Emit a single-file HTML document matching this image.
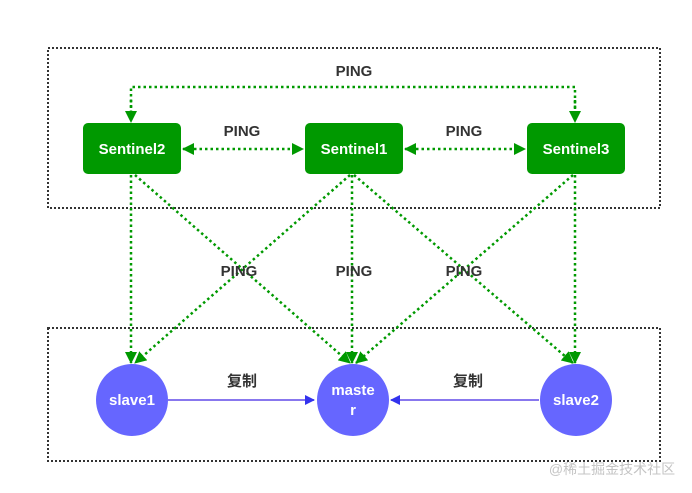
<!DOCTYPE html><html><head><meta charset="utf-8"><style>html,body{margin:0;padding:0;background:#fff}svg{display:block}</style></head><body>
<svg width="692" height="493" viewBox="0 0 692 493" xmlns="http://www.w3.org/2000/svg" font-family="Liberation Sans, Noto Sans CJK SC, sans-serif">
<defs>
<marker id="g" markerWidth="12" markerHeight="12" refX="11" refY="6" orient="auto" markerUnits="userSpaceOnUse" viewBox="0 0 12 12"><path d="M0,0 L12,6 L0,12 z" fill="#009900"/></marker>
<marker id="gs" markerWidth="12" markerHeight="12" refX="1" refY="6" orient="auto" markerUnits="userSpaceOnUse" viewBox="0 0 12 12"><path d="M12,0 L0,6 L12,12 z" fill="#009900"/></marker>
<marker id="b" markerWidth="10" markerHeight="10" refX="9" refY="5" orient="auto" markerUnits="userSpaceOnUse" viewBox="0 0 10 10"><path d="M0,0 L10,5 L0,10 z" fill="#3333ee"/></marker>
</defs>
<g fill="none" stroke="#333" stroke-width="2" stroke-dasharray="2 2">
<rect x="48" y="48" width="612" height="160"/>
<rect x="48" y="328" width="612" height="133"/>
</g>
<g fill="none" stroke="#009900" stroke-width="2.5" stroke-dasharray="2.5 3">
<path d="M131,113 L131,87 L575,87 L575,113" />
<line x1="131" y1="100" x2="131" y2="122" marker-end="url(#g)"/>
<line x1="575" y1="100" x2="575" y2="122" marker-end="url(#g)"/>
<line x1="183" y1="149" x2="303" y2="149" marker-start="url(#gs)" marker-end="url(#g)"/>
<line x1="405" y1="149" x2="525" y2="149" marker-start="url(#gs)" marker-end="url(#g)"/>
<line x1="131" y1="175" x2="131" y2="363" marker-end="url(#g)"/>
<line x1="135" y1="175" x2="350" y2="363" marker-end="url(#g)"/>
<line x1="350" y1="175" x2="135" y2="363" marker-end="url(#g)"/>
<line x1="352" y1="175" x2="352" y2="363" marker-end="url(#g)"/>
<line x1="354" y1="175" x2="573" y2="363" marker-end="url(#g)"/>
<line x1="573" y1="175" x2="356" y2="363" marker-end="url(#g)"/>
<line x1="575" y1="175" x2="575" y2="363" marker-end="url(#g)"/>
</g>
<g fill="#009900">
<rect x="83" y="123" width="98" height="51" rx="5"/>
<rect x="305" y="123" width="98" height="51" rx="5"/>
<rect x="527" y="123" width="98" height="51" rx="5"/>
</g>
<g fill="#fff" font-weight="bold" font-size="15" text-anchor="middle">
<text x="132" y="154">Sentinel2</text>
<text x="354" y="154">Sentinel1</text>
<text x="576" y="154">Sentinel3</text>
</g>
<g fill="#333" font-weight="bold" font-size="15" text-anchor="middle">
<text x="354" y="76">PING</text>
<text x="242" y="136">PING</text>
<text x="464" y="136">PING</text>
<text x="239" y="276">PING</text>
<text x="354" y="276">PING</text>
<text x="464" y="276">PING</text>
<text x="242" y="386">复制</text>
<text x="468" y="386">复制</text>
</g>
<g stroke="#8877ee" stroke-width="2">
<line x1="168" y1="400" x2="314" y2="400" marker-end="url(#b)"/>
<line x1="539" y1="400" x2="391" y2="400" marker-end="url(#b)"/>
</g>
<g fill="#6666ff">
<circle cx="132" cy="400" r="36"/>
<circle cx="353" cy="400" r="36"/>
<circle cx="576" cy="400" r="36"/>
</g>
<g fill="#fff" font-weight="bold" font-size="15" text-anchor="middle">
<text x="132" y="405">slave1</text>
<text x="353" y="395">maste</text>
<text x="353" y="415">r</text>
<text x="576" y="405">slave2</text>
</g>
<text x="612" y="474" fill="#c4c4c4" font-size="14" text-anchor="middle">@稀土掘金技术社区</text>
</svg>
</body></html>
